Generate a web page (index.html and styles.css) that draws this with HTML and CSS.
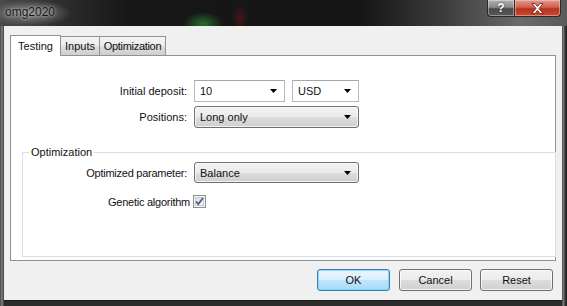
FILE: index.html
```html
<!DOCTYPE html>
<html>
<head>
<meta charset="utf-8">
<title>omg2020</title>
<link rel="stylesheet" href="styles.css">
</head>
<body>
<div class="window">
  <div class="titlebar">
    <span class="title">omg2020</span>
    <div class="caption-btns">
      <div class="cap help">?</div>
      <div class="cap close">
        <svg width="13" height="11" viewBox="0 0 13 11"><path d="M1 0.5h3l2.5 3 2.5-3h3l-4 5 4 5h-3l-2.5-3-2.5 3h-3l4-5z" fill="#fff" stroke="#5a1a12" stroke-width="0.8"/></svg>
      </div>
    </div>
  </div>
  <div class="frame">
    <div class="client">
      <div class="tabs">
        <div class="tab active t-testing">Testing</div>
        <div class="tab t-inputs">Inputs</div>
        <div class="tab t-opt">Optimization</div>
      </div>
      <div class="panel">
        <div class="form">
          <label class="lbl">Initial deposit:</label>
          <div class="combo edit w-deposit"><span>10</span><svg class="arrow" width="7" height="4" viewBox="0 0 7 4"><path d="M0 0h7l-3.5 4z" fill="#000"/></svg></div>
          <div class="combo edit w-cur"><span>USD</span><svg class="arrow" width="7" height="4" viewBox="0 0 7 4"><path d="M0 0h7l-3.5 4z" fill="#000"/></svg></div>
          <label class="lbl">Positions:</label>
          <div class="combo list span2"><span>Long only</span><svg class="arrow" width="7" height="4" viewBox="0 0 7 4"><path d="M0 0h7l-3.5 4z" fill="#000"/></svg></div>
        </div>
        <fieldset class="group">
          <legend>Optimization</legend>
          <div class="gform">
            <label class="lbl narrow">Optimized parameter:</label>
            <div class="combo list w-param"><span>Balance</span><svg class="arrow" width="7" height="4" viewBox="0 0 7 4"><path d="M0 0h7l-3.5 4z" fill="#000"/></svg></div>
            <label class="lbl chk-lbl narrow">Genetic algorithm</label>
            <div class="checkbox"><svg width="9" height="9" viewBox="0 0 9 9"><path d="M1 4.5l2.3 2.6L8 1" fill="none" stroke="#4a5d8e" stroke-width="1.8"/></svg></div>
          </div>
        </fieldset>
      </div>
      <div class="buttons">
        <div class="btn default">OK</div>
        <div class="btn">Cancel</div>
        <div class="btn">Reset</div>
      </div>
    </div>
  </div>
</div>
</body>
</html>
```
FILE: styles.css
```css
* { box-sizing: border-box; }
html, body { margin: 0; padding: 0; }
body {
  width: 567px;
  height: 306px;
  overflow: hidden;
  background: #1b1b1b;
  font-family: "Liberation Sans", Arial, sans-serif;
  font-size: 11px;
  color: #111;
}
.window {
  width: 567px;
  height: 306px;
  display: flex;
  flex-direction: column;
}
.titlebar {
  height: 26px;
  flex: none;
  display: flex;
  align-items: flex-start;
  background:
    radial-gradient(ellipse 42px 13px at 30px 13px, rgba(150,150,150,0.8), rgba(150,150,150,0) 100%),
    radial-gradient(ellipse 20px 12px at 203px 24px, rgba(40,140,50,0.75), rgba(40,140,50,0) 100%),
    radial-gradient(ellipse 8px 14px at 240px 18px, rgba(120,20,20,0.5), rgba(120,20,20,0) 100%),
    linear-gradient(to right, #4a4a4a 0px, #2a2a2a 70px, #171717 130px, #151515 360px, #3a3a3a 440px, #6a6a6a 520px, #5a5a5a 567px);
}
.title {
  padding: 5px 0 0 5px;
  font-size: 12px;
  line-height: 15px;
  color: #151515;
  text-shadow: 0 0 5px rgba(220,220,220,0.7), 0 0 2px rgba(220,220,220,0.6);
}
.caption-btns {
  margin-left: auto;
  margin-right: 6px;
  display: flex;
  height: 17px;
}
.cap {
  height: 17px;
  display: flex;
  align-items: center;
  justify-content: center;
  border: 1px solid #2a2a2a;
  border-top: none;
  color: #fff;
  font-weight: bold;
  font-size: 12px;
}
.help {
  width: 28px;
  border-radius: 0 0 0 4px;
  background: linear-gradient(to bottom, #b0b0b0 0%, #8a8a8a 45%, #4a4a4a 55%, #5a5a5a 100%);
  box-shadow: inset 0 0 0 1px rgba(255,255,255,0.35);
  text-shadow: 0 0 2px #222;
}
.close {
  width: 46px;
  border-left: none;
  border-radius: 0 0 4px 0;
  background: linear-gradient(to bottom, #e09a8e 0%, #d0604e 45%, #b8321e 55%, #c84a30 100%);
  box-shadow: inset 0 0 0 1px rgba(255,220,210,0.45);
}
.frame {
  flex: 1;
  display: flex;
  padding: 0 5px 6px 4px;
  background:
    radial-gradient(ellipse 50px 6px at 245px 306px, rgba(140,25,25,0.8), rgba(140,25,25,0) 100%),
    linear-gradient(to right, #2a2a2a 0px, #7a7a7a 1px, #6a6a6a 3px, #2c2c2c 4px, #2c2c2c 562px, #8a8a8a 563px, #3a3a3a 565px, #1a1a1a 567px);
}
.client {
  flex: 1;
  background: #f0f0f0;
  display: flex;
  flex-direction: column;
  padding: 9px 6px 0 6px;
  box-shadow: 0 1px 0 0 #1a1a1a;
}
.tabs {
  display: flex;
  height: 20px;
  align-items: flex-start;
  position: relative;
  z-index: 1;
}
.tab {
  height: 19px;
  margin-top: 1px;
  padding: 3px 0 0 0;
  text-align: center;
  line-height: 13px;
  white-space: nowrap;
  border: 1px solid #8e9196;
  border-bottom: none;
  background: linear-gradient(to bottom, #f4f4f4 0%, #ebebeb 50%, #dddddd 51%, #cfcfcf 100%);
  margin-left: -1px;
}
.tab.active {
  height: 21px;
  margin-top: 0;
  margin-left: 0;
  padding-top: 4px;
  background: #fff;
}
.tab.active + .tab { border-left: none; margin-left: 0; }
.t-testing { width: 51px; }
.t-inputs { width: 39px; }
.t-opt { width: 67px; letter-spacing: -0.3px; }
.panel {
  height: 206px;
  background: #fff;
  border: 1px solid #8e9196;
  display: flex;
  flex-direction: column;
}
.form {
  display: grid;
  grid-template-columns: 176px 91px 67px;
  column-gap: 7px;
  row-gap: 4px;
  margin-top: 24px;
  align-items: center;
}
.lbl {
  text-align: right;
  white-space: nowrap;
}
.narrow { letter-spacing: -0.25px; }
.combo {
  height: 22px;
  display: flex;
  align-items: center;
  padding: 0 7px 0 5px;
  white-space: nowrap;
}
.combo span { flex: 1; }
.combo .arrow { flex: none; }
.combo.edit {
  background: #fff;
  border: 1px solid #b5b8c0;
  border-top-color: #a3a6ad;
}
.combo.list {
  border: 1px solid #707070;
  border-radius: 3px;
  background: linear-gradient(to bottom, #f2f2f2 0%, #ebebeb 50%, #dddddd 51%, #cfcfcf 100%);
  box-shadow: inset 0 0 0 1px rgba(255,255,255,0.7);
}
.span2 { grid-column: 2 / span 2; }
.group {
  margin: 17px -1px 3px 11px;
  padding: 3px 0 0 0;
  border: 1px solid #d9dfe4;
  flex: 1;
  min-width: 0;
}
.group legend {
  margin-left: 6px;
  padding: 0 2px;
  line-height: 14px;
}
.gform {
  display: grid;
  grid-template-columns: 164px 165px;
  column-gap: 7px;
  row-gap: 12px;
  align-items: center;
}
.w-param { height: 21px; }
.chk-lbl { margin-right: -3px; }
.checkbox {
  width: 13px;
  height: 13px;
  margin-left: -1px;
  border: 1px solid #8f8f8f;
  background: linear-gradient(135deg, #dcdcdc 0%, #f6f6f6 100%);
  box-shadow: inset 0 0 0 1px #f4f4f4, inset 0 0 0 2px #c8ccd2;
  display: flex;
  align-items: center;
  justify-content: center;
}
.buttons {
  display: flex;
  justify-content: flex-end;
  gap: 8px;
  margin-top: 8px;
  padding-right: 3px;
}
.btn {
  width: 73px;
  height: 22px;
  border: 1px solid #707070;
  border-radius: 3px;
  display: flex;
  align-items: center;
  justify-content: center;
  background: linear-gradient(to bottom, #f2f2f2 0%, #ebebeb 50%, #dddddd 51%, #cfcfcf 100%);
  box-shadow: inset 0 0 0 1px rgba(255,255,255,0.75);
}
.btn.default {
  margin-right: 1px;
  border-color: #3c7fb1;
  background: linear-gradient(to bottom, #eaf6fd 0%, #d9f0fc 50%, #bee6fd 51%, #a7d9f5 100%);
  box-shadow: inset 0 0 0 1px rgba(120,210,245,0.8);
}
```
